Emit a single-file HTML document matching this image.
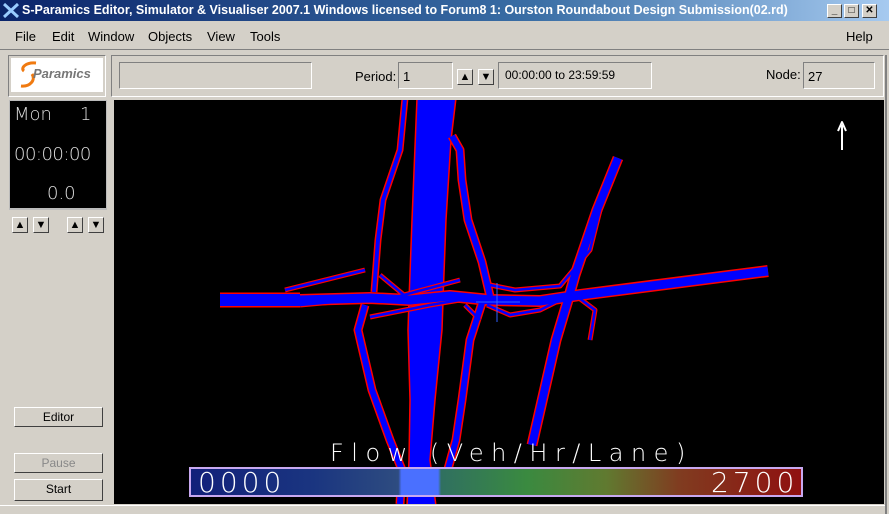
<!DOCTYPE html>
<html><head><style>
*{margin:0;padding:0;box-sizing:border-box}
body{width:889px;height:514px;background:#d4d0c8;font-family:"Liberation Sans",sans-serif;font-size:13px;position:relative;overflow:hidden}
.a{position:absolute}
.title{left:0;top:0;width:889px;height:21px;background:linear-gradient(90deg,#0a246a,#3a6ea5 60%,#a6caf0);color:#fff;font-weight:bold;font-size:12.5px;line-height:21px;padding-left:22px;white-space:nowrap;font-family:"Liberation Sans",sans-serif}
.wb{top:4px;width:15px;height:14px;background:#d4d0c8;border:1px solid;border-color:#fff #404040 #404040 #fff;font-size:10px;line-height:12px;text-align:center;color:#000;font-weight:bold}
.sunk{border:1px solid;border-color:#808080 #fff #fff #808080}
.btn{background:#d4d0c8;border:1px solid;border-color:#fff #404040 #404040 #fff;text-align:center;font-size:12px;line-height:18px}
.arr{width:16px;height:16px;background:#d4d0c8;border:1px solid;border-color:#fff #404040 #404040 #fff;font-size:11px;line-height:14px;text-align:center}
.clk{color:#ddd;font-family:"DejaVu Sans",sans-serif;font-weight:200;font-size:18px}
.big{color:#fff;font-family:'DejaVu Sans',sans-serif;font-weight:200;white-space:nowrap}
</style></head><body>
<div class="a title">S-Paramics Editor, Simulator &amp; Visualiser 2007.1 Windows licensed to Forum8 1: Ourston Roundabout Design Submission(02.rd)</div>
<svg class="a" style="left:3px;top:3px" width="16" height="15"><path d="M1 1L15 14M15 1L1 14" stroke="#9cf" stroke-width="3"/></svg>
<div class="a wb" style="left:827px">_</div><div class="a wb" style="left:844px">□</div><div class="a wb" style="left:862px">✕</div>
<div class="a" style="left:0;top:21px;width:889px;height:29px;border-bottom:1px solid #808080"></div>
<div class="a" style="left:15px;top:29px">File</div>
<div class="a" style="left:52px;top:29px">Edit</div>
<div class="a" style="left:88px;top:29px">Window</div>
<div class="a" style="left:148px;top:29px">Objects</div>
<div class="a" style="left:207px;top:29px">View</div>
<div class="a" style="left:250px;top:29px">Tools</div>
<div class="a" style="left:846px;top:29px">Help</div>
<div class="a sunk" style="left:8px;top:55px;width:98px;height:42px"></div>
<div class="a" style="left:11px;top:58px;width:92px;height:34px;background:#fff"></div>
<svg class="a" style="left:18px;top:60px" width="20" height="30"><path d="M18 3C8 2 2 8 6 11M14 14C18 20 12 27 3 26" stroke="#f07a10" stroke-width="3" fill="none"/></svg>
<div class="a" style="left:33px;top:66px;color:#777;font-style:italic;font-weight:bold;font-size:13px">Paramics</div>
<div class="a sunk" style="left:111px;top:55px;width:773px;height:42px"></div>
<div class="a sunk" style="left:119px;top:62px;width:193px;height:27px"></div>
<div class="a" style="left:355px;top:69px">Period:</div>
<div class="a sunk" style="left:398px;top:62px;width:55px;height:27px;padding:6px 4px">1</div>
<div class="a arr" style="left:457px;top:69px">▲</div><div class="a arr" style="left:478px;top:69px">▼</div>
<div class="a sunk" style="left:498px;top:62px;width:154px;height:27px;padding:5px 6px;font-size:12px">00:00:00 to 23:59:59</div>
<div class="a" style="left:766px;top:67px">Node:</div>
<div class="a sunk" style="left:803px;top:62px;width:72px;height:27px;padding:6px 4px">27</div>
<div class="a" style="left:885px;top:55px;width:2px;height:459px;background:#808080"></div>
<div class="a" style="left:9px;top:100px;width:98px;height:110px;background:#bbb"></div>
<div class="a" style="left:10px;top:101px;width:96px;height:107px;background:#000"></div>
<div class="a clk" style="left:14px;top:104px">Mon</div><div class="a clk" style="left:80px;top:104px">1</div>
<div class="a clk" style="left:14px;top:144px;letter-spacing:-0.5px">00:00:00</div>
<div class="a clk" style="left:47px;top:183px">0.0</div>
<div class="a arr" style="left:12px;top:217px">▲</div><div class="a arr" style="left:33px;top:217px">▼</div>
<div class="a arr" style="left:67px;top:217px">▲</div><div class="a arr" style="left:88px;top:217px">▼</div>
<div class="a btn" style="left:14px;top:407px;width:89px;height:20px">Editor</div>
<div class="a btn" style="left:14px;top:453px;width:89px;height:20px;color:#888">Pause</div>
<div class="a btn" style="left:14px;top:479px;width:89px;height:22px">Start</div>
<div class="a" style="left:114px;top:100px;width:770px;height:404px;background:#000"></div>
<svg class="a" style="left:0;top:0" width="889" height="514">
<defs><clipPath id="c"><rect x="114" y="100" width="770" height="404"/></clipPath></defs>
<g clip-path="url(#c)" fill="none" stroke-linejoin="round">
<g stroke="#f00">
<polygon points="417,98 456,98 451,140 446,220 443,300 442,330 435,400 430,460 436,506 407,506 409,460 410,400 408,330 409,300 412,220" fill="#00f" stroke-width="1.5"/>
<polyline points="220,300 300,300 370,298 410,300 450,296 490,300 540,301 580,295 768,271" stroke-width="12"/>
<polyline points="220,300 300,300" stroke-width="15"/>
<polyline points="618,158 597,210 575,275 568,300 556,340 532,445" stroke-width="11"/>
<polyline points="405,98 400,150 383,200 378,240 374,292" stroke-width="7"/>
<polyline points="365,305 358,330 372,390 390,440 402,470 400,504" stroke-width="9"/>
<polyline points="452,136 460,150 462,180 468,220 482,262 490,296" stroke-width="9"/>
<polyline points="482,303 470,340 462,400 456,440 445,480" stroke-width="9"/>
<polyline points="300,305 400,296 460,280" stroke-width="5"/>
<polyline points="285,290 365,270" stroke-width="5"/>
<polyline points="380,275 410,300" stroke-width="5"/>
<polyline points="370,317 430,305 460,300" stroke-width="5"/>
<polyline points="487,305 510,315 540,310 560,300" stroke-width="5"/>
<polyline points="490,285 515,290 560,286 590,250 600,210" stroke-width="5"/>
<polyline points="575,295 595,310 590,340" stroke-width="5"/>
<polyline points="465,305 480,320" stroke-width="5"/>
</g>
<g stroke="#00f">
<polyline points="220,300 300,300 370,298 410,300 450,296 490,300 540,301 580,295 768,271" stroke-width="9"/>
<polyline points="220,300 300,300" stroke-width="12"/>
<polyline points="618,158 597,210 575,275 568,300 556,340 532,445" stroke-width="8"/>
<polyline points="405,98 400,150 383,200 378,240 374,292" stroke-width="4"/>
<polyline points="365,305 358,330 372,390 390,440 402,470 400,504" stroke-width="6"/>
<polyline points="452,136 460,150 462,180 468,220 482,262 490,296" stroke-width="6"/>
<polyline points="482,303 470,340 462,400 456,440 445,480" stroke-width="6"/>
<polyline points="300,305 400,296 460,280" stroke-width="2.5"/>
<polyline points="285,290 365,270" stroke-width="2.5"/>
<polyline points="380,275 410,300" stroke-width="2.5"/>
<polyline points="370,317 430,305 460,300" stroke-width="2.5"/>
<polyline points="487,305 510,315 540,310 560,300" stroke-width="2.5"/>
<polyline points="490,285 515,290 560,286 590,250 600,210" stroke-width="2.5"/>
<polyline points="575,295 595,310 590,340" stroke-width="2.5"/>
<polyline points="465,305 480,320" stroke-width="2.5"/>
</g>
<path d="M497 283V322M476 302H520" stroke="#3060ff" stroke-width="1"/>
<path d="M842 150V125M838 131L842 122L846 131" stroke="#fff" stroke-width="2"/>
</g></svg>
<div class="a big" style="left:330px;top:439px;font-size:24px;letter-spacing:7.5px">Flow (Veh/Hr/Lane)</div>
<div class="a" style="left:189px;top:467px;width:614px;height:30px;border:2px solid #c8a8f0;background:linear-gradient(90deg,#12207a 0%,#1a3580 20%,#2e4c80 34%,#4a70ff 34.5%,#4a70ff 40.5%,#307060 41%,#3a8a40 55%,#607a30 68%,#803c20 80%,#901010 100%)"></div>
<div class="a big" style="left:198px;top:466px;font-size:28px;letter-spacing:4px">0000</div>
<div class="a big" style="left:711px;top:466px;font-size:28px;letter-spacing:4px">2700</div>
<div class="a" style="left:0;top:505px;width:885px;height:9px;background:#d4d0c8;border-top:1px solid #fff"></div>
</body></html>
